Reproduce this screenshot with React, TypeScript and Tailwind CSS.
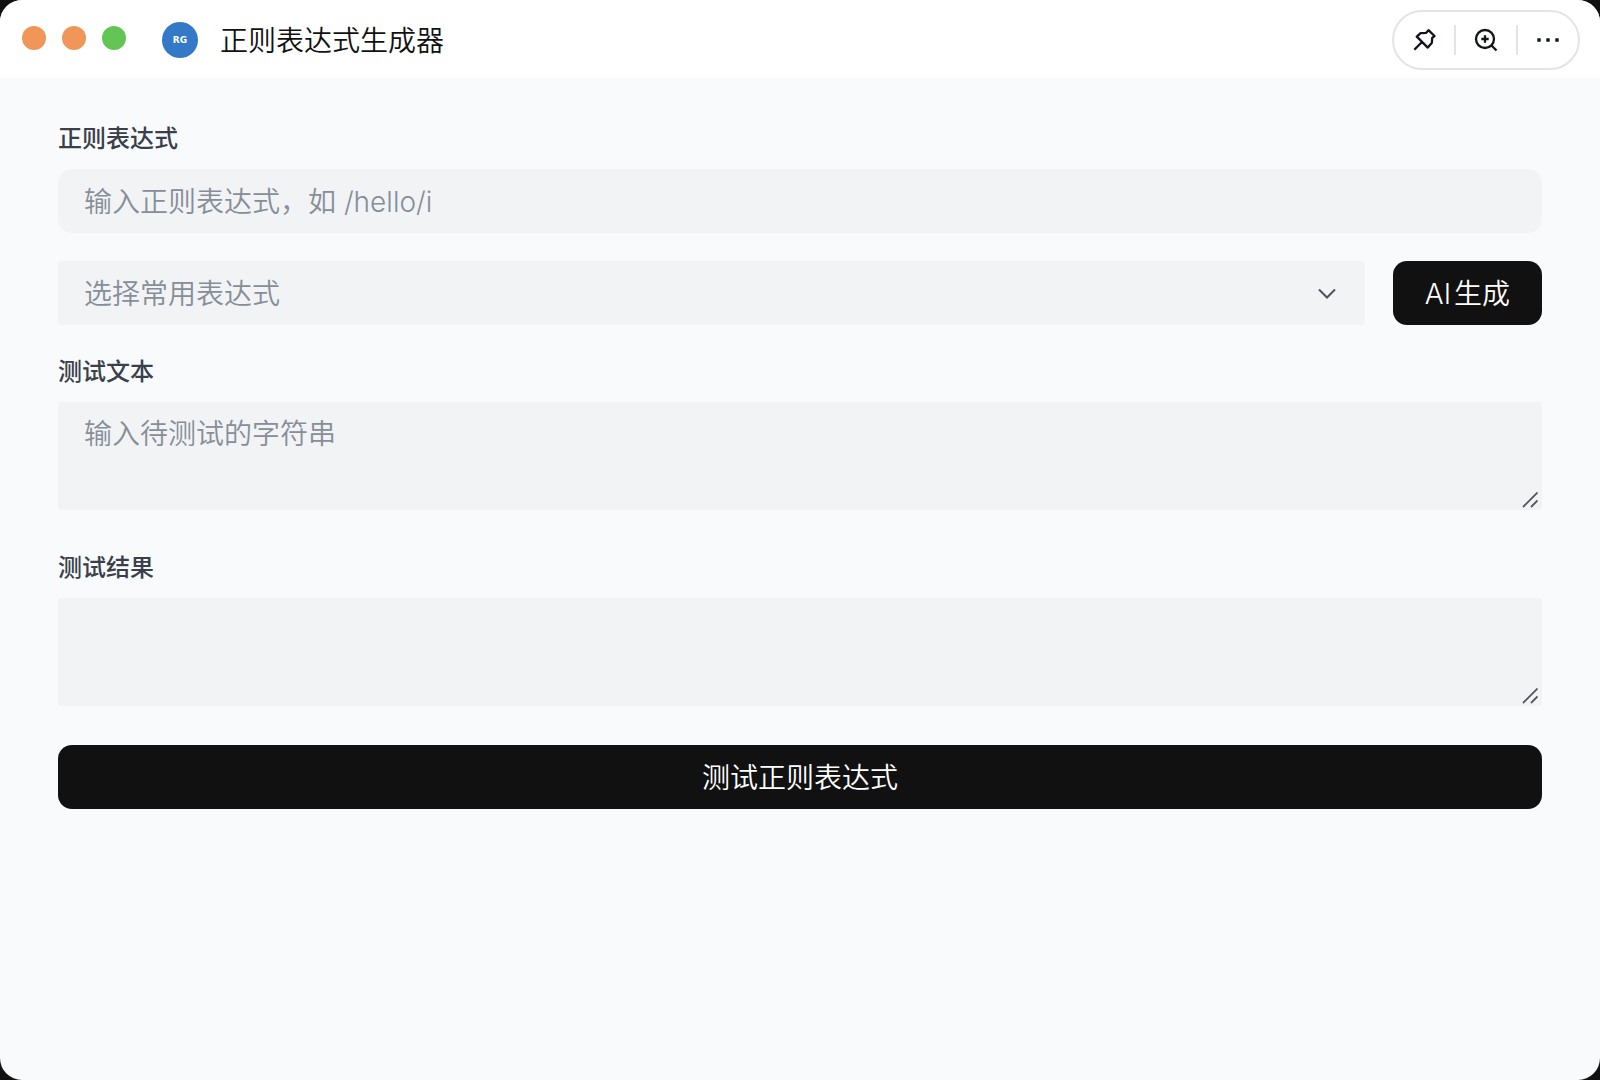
import React from "react";

interface FieldProps {
  id: string;
  label: string;
  placeholder?: string;
  readOnly?: boolean;
  value: string;
  onChange?: (value: string) => void;
}

const presets = [
  { label: "邮箱", value: "/^[\\w.-]+@[\\w-]+\\.[\\w.]+$/" },
  { label: "手机号", value: "/^1[3-9]\\d{9}$/" },
];

const TextAreaField: React.FC<FieldProps> = ({ id, label, placeholder, readOnly, value, onChange }) => (
  <div className="flex flex-col gap-3">
    <label htmlFor={id} className="text-2xl leading-9 font-medium text-[#39404b]">
      {label}
    </label>
    <div className="relative flex">
      <textarea
        id={id}
        rows={2}
        readOnly={readOnly}
        placeholder={placeholder}
        value={value}
        onChange={(e) => onChange?.(e.target.value)}
        className="h-27 w-full resize-none rounded-sm bg-[#f2f3f5] px-[26px] py-3 text-[28px] leading-10 font-[350] text-[#1d2129] outline-none placeholder:text-[#868e99]"
      />
      <svg viewBox="0 0 16 16" className="pointer-events-none absolute right-1 bottom-0.5 h-4 w-4" stroke="#54575c" strokeWidth="1.8">
        <path d="M1 15 15.5 .5M9 15l6.5-6.5" />
      </svg>
    </div>
  </div>
);

const App: React.FC = () => {
  const [regex, setRegex] = React.useState("");
  const [preset, setPreset] = React.useState("");
  const [text, setText] = React.useState("");
  const [result, setResult] = React.useState("");

  const handleTest = () => {
    try {
      const match = regex.match(/^\/(.*)\/(\w*)$/);
      const pattern = match ? new RegExp(match[1], match[2]) : new RegExp(regex);
      setResult(JSON.stringify(text.match(pattern)));
    } catch (e) {
      setResult("表达式无效");
    }
  };

  return (
    <div className="min-h-screen bg-[#111111] font-['Inter','Noto_Sans_CJK_SC',sans-serif]">
      <div className="flex min-h-screen flex-col overflow-hidden rounded-[22px] bg-[#f9fafc]">
        <header className="flex h-[78px] items-center bg-white pt-0.5 pr-5 pl-[22px]">
          <div className="flex gap-4 pb-1">
            <span className="h-6 w-6 rounded-full bg-[#f09658]" />
            <span className="h-6 w-6 rounded-full bg-[#f09658]" />
            <span className="h-6 w-6 rounded-full bg-[#62c554]" />
          </div>
          <div className="ml-9 flex h-9 w-9 items-center justify-center rounded-full bg-[#3478c8] pt-0.5 font-['DejaVu_Sans',sans-serif] text-[9px] font-bold text-white">
            RG
          </div>
          <h1 className="ml-[22px] pt-0.5 text-[28px] leading-10 font-[350] text-[#111111]">正则表达式生成器</h1>
          <div className="ml-auto flex h-15 items-center rounded-full border-2 border-[#e3e4e9] text-[#111418]">
            <button aria-label="置顶" className="flex h-full w-15 items-center justify-center">
              <svg viewBox="0 0 24 24" className="h-6 w-6" fill="none" stroke="currentColor" strokeWidth="2.3" strokeLinejoin="round">
                <path d="M16.5 2.2 22.5 8l-2.3 1.8-.3 5-4.1 4.8L4.8 8.6l3.8-3.5 5.6-.3zM10 14l-7.7 7.7" />
              </svg>
            </button>
            <span className="h-[30px] w-0.5 bg-[#e3e4e9]" />
            <button aria-label="放大" className="flex h-full w-15 items-center justify-center">
              <svg viewBox="0 0 24 24" className="h-6 w-6" fill="none" stroke="currentColor" strokeWidth="2.3">
                <circle cx="11" cy="11" r="9" />
                <path d="m17.3 17.3 5.2 5.2M11 7.3v7.4M7.3 11h7.4" />
              </svg>
            </button>
            <span className="h-[30px] w-0.5 bg-[#e3e4e9]" />
            <button aria-label="更多" className="flex h-full w-15 items-center justify-center">
              <svg viewBox="0 0 24 24" className="h-6 w-6" fill="currentColor">
                <rect x="1.3" y="10.3" width="3.4" height="3.4" rx=".5" />
                <rect x="10.3" y="10.3" width="3.4" height="3.4" rx=".5" />
                <rect x="19.3" y="10.3" width="3.4" height="3.4" rx=".5" />
              </svg>
            </button>
          </div>
        </header>

        <main className="flex flex-col px-[58px] pt-[43px]">
          <div className="flex flex-col gap-3">
            <label htmlFor="regex" className="text-2xl leading-9 font-medium text-[#39404b]">
              正则表达式
            </label>
            <input
              id="regex"
              type="text"
              value={regex}
              onChange={(e) => setRegex(e.target.value)}
              placeholder="输入正则表达式，如 /hello/i"
              className="h-16 w-full rounded-[14px] bg-[#f2f3f5] px-[26px] pt-0.5 text-[28px] font-[350] text-[#1d2129] outline-none placeholder:text-[#868e99]"
            />
          </div>

          <div className="mt-7 flex gap-7">
            <div className="relative flex-1">
              <select
                aria-label="选择常用表达式"
                value={preset}
                onChange={(e) => {
                  setPreset(e.target.value);
                  setRegex(e.target.value);
                }}
                className="h-16 w-full appearance-none rounded-sm bg-[#f2f3f5] px-[26px] pt-0.5 text-[28px] font-[350] text-[#868e99] outline-none"
              >
                <option value="">选择常用表达式</option>
                {presets.map((item) => (
                  <option key={item.value} value={item.value}>
                    {item.label}
                  </option>
                ))}
              </select>
              <svg
                viewBox="0 0 24 24"
                className="pointer-events-none absolute top-5 right-[26px] h-6 w-6"
                fill="none"
                stroke="#4e535f"
                strokeWidth="2"
              >
                <path d="m4 8.5 8 8 8-8" />
              </svg>
            </div>
            <button className="flex h-16 items-center gap-[3px] rounded-[14px] bg-[#111111] px-8 pt-0.5 text-[28px] font-[350] text-white">
              <span>AI</span>
              <span>生成</span>
            </button>
          </div>

          <div className="mt-[29px] flex flex-col gap-10">
            <TextAreaField id="text" label="测试文本" placeholder="输入待测试的字符串" value={text} onChange={setText} />
            <TextAreaField id="result" label="测试结果" readOnly value={result} />
          </div>

          <button
            onClick={handleTest}
            className="mt-[39px] h-16 w-full rounded-[14px] bg-[#111111] pt-0.5 text-[28px] font-[350] text-white"
          >
            测试正则表达式
          </button>
        </main>
      </div>
    </div>
  );
};

export default App;
